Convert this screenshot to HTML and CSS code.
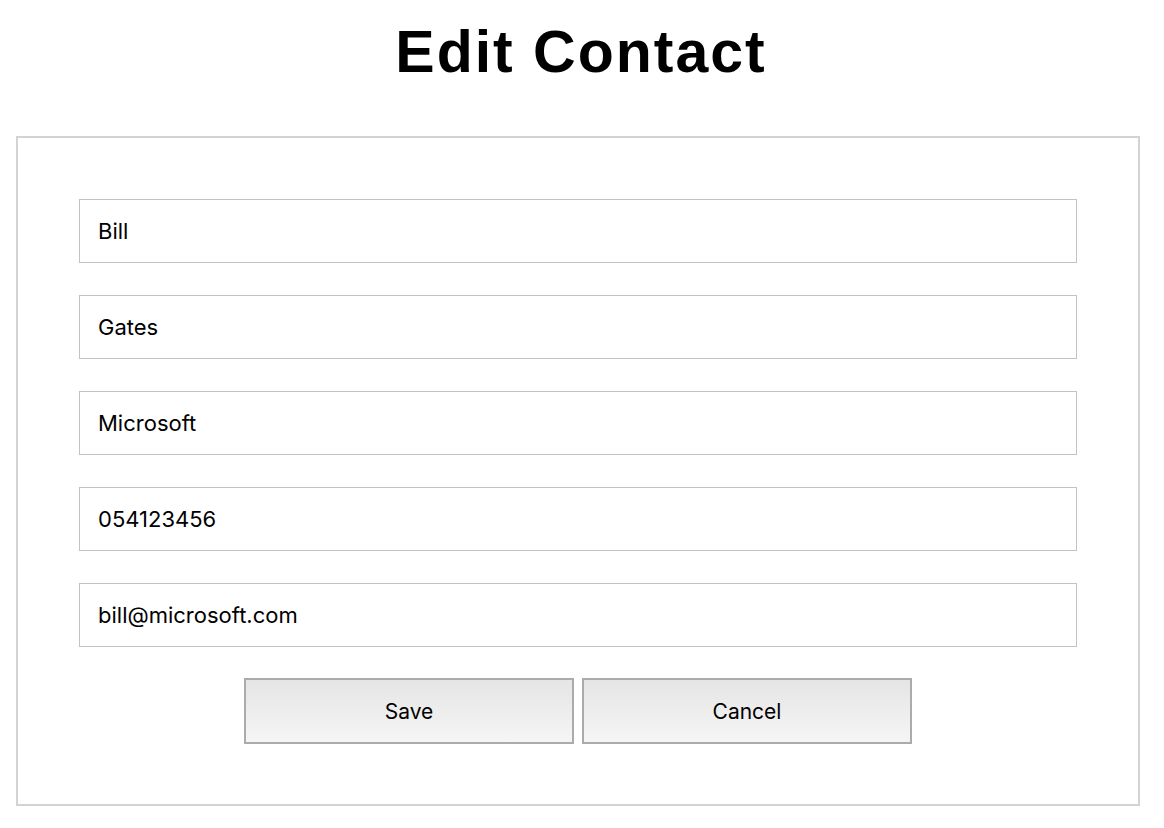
FILE: index.html
```html
<!DOCTYPE html>
<html>
<head>
<meta charset="utf-8">
<title>Edit Contact</title>
<link rel="stylesheet" href="styles.css">
</head>
<body>
<h1 class="title">Edit Contact</h1>
<form class="panel">
  <input class="field" type="text" value="Bill">
  <input class="field" type="text" value="Gates">
  <input class="field" type="text" value="Microsoft">
  <input class="field" type="text" value="054123456">
  <input class="field" type="text" value="bill@microsoft.com">
  <div class="actions">
    <button class="btn" type="button">Save</button>
    <button class="btn" type="button">Cancel</button>
  </div>
</form>
</body>
</html>
```

FILE: styles.css
```css
html, body {
  margin: 0;
  padding: 0;
  background: #ffffff;
}
body {
  font-family: "Liberation Sans", Arial, sans-serif;
  color: #000;
  width: 1164px;
}
.title {
  margin: 20px 0 0 0;
  padding-left: 2px;
  width: 1158px;
  font-size: 59px;
  line-height: 65px;
  font-weight: bold;
  letter-spacing: 2px;
  text-align: center;
}
.panel {
  box-sizing: border-box;
  margin: 51px 0 0 16px;
  width: 1124px;
  height: 670px;
  border: 2px solid #d3d3d3;
  padding: 61px 61px 0 61px;
  display: flex;
  flex-direction: column;
  gap: 32px;
}
.field {
  box-sizing: border-box;
  width: 998px;
  height: 64px;
  margin: 0;
  border: 1px solid #c2c2c2;
  border-radius: 0;
  padding: 0 18px;
  font-family: Inter, "Liberation Sans", Arial, sans-serif;
  font-size: 22px;
  color: #000;
  background: #fff;
  outline: none;
}
.actions {
  display: flex;
  justify-content: center;
  gap: 8px;
  margin-top: -1px;
}
.btn {
  box-sizing: border-box;
  width: 330px;
  height: 66px;
  margin: 0;
  border: 2px solid #ababab;
  border-radius: 0;
  background: linear-gradient(to bottom, #e5e5e5, #f5f5f5);
  font-family: Inter, "Liberation Sans", Arial, sans-serif;
  font-size: 21px;
  color: #000;
  padding: 0;
}
```
